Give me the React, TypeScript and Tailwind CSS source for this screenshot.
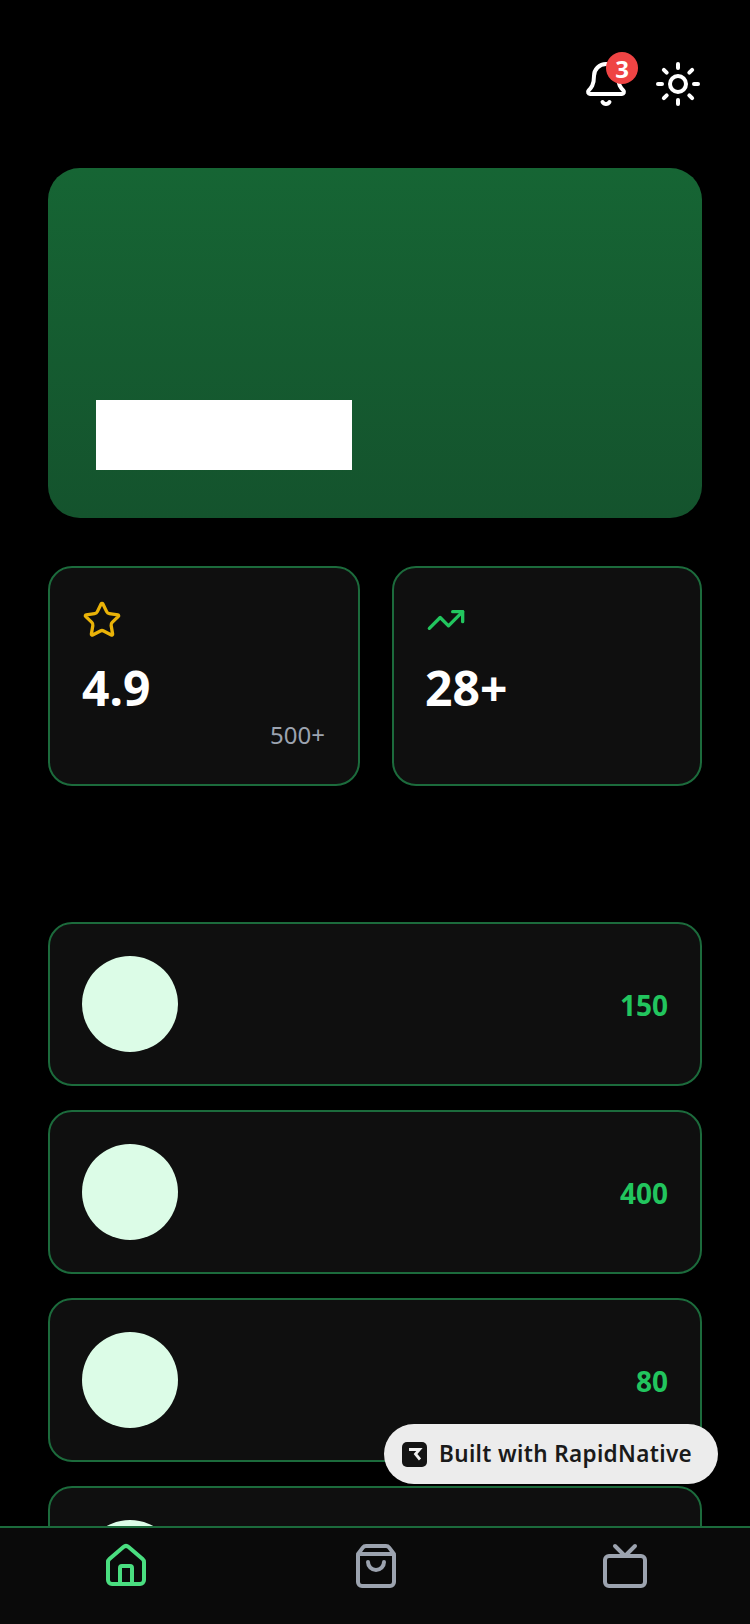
import { Bell, House, ShoppingBag, Star, Sun, TrendingUp, Tv } from "lucide-react";

const ITEMS = ["150", "400", "80", ""];

function RapidLogo() {
  return (
    <svg viewBox="0 0 25 25" className="w-[25px] h-[25px] shrink-0">
      <rect width="25" height="25" rx="5" fill="#141414" />
      <path
        d="M7 7.5h10.5l-4 4.5 4.5 5.5"
        fill="none"
        stroke="#f2f2f2"
        strokeWidth="2.8"
      />
    </svg>
  );
}

function StatCard({
  icon,
  value,
  note,
  className,
  valueClassName,
}: {
  icon: React.ReactNode;
  value: string;
  note?: string;
  className: string;
  valueClassName: string;
}) {
  return (
    <div
      className={`${className} h-[220px] rounded-[24px] border-2 border-[#1c6b3c] bg-[#0f0f0f] p-8`}
    >
      {icon}
      <p
        className={`${valueClassName} mt-4 text-[48px] leading-[64px] font-bold text-white`}
      >
        {value}
      </p>
      {note && (
        <p className="pr-[1px] text-right text-[24px] leading-[30px] text-[#9ca3af]">
          {note}
        </p>
      )}
    </div>
  );
}

export default function App() {
  return (
    <div className="relative h-[1624px] flex flex-col overflow-hidden bg-black font-['Noto_Sans',sans-serif]">
      <div className="flex-1 min-h-0 overflow-hidden px-12 pt-[60px]">
        <div className="flex justify-end gap-6">
          <div className="relative">
            <Bell size={48} color="#ffffff" />
            <span className="absolute -top-2 -right-2 w-8 h-8 rounded-full bg-[#ef4444] flex items-center justify-center pt-[1px] text-[24px] font-bold text-white">
              3
            </span>
          </div>
          <Sun size={48} color="#ffffff" />
        </div>

        <div className="mt-[60px] h-[350px] rounded-[32px] bg-gradient-to-b from-[#166534] to-[#14532d] p-12 flex items-end">
          <div className="w-[256px] h-[70px] bg-white" />
        </div>

        <div className="mt-12 flex gap-8">
          <StatCard
            className="w-[312px]"
            valueClassName="ml-0"
            icon={<Star size={40} color="#eab308" />}
            value="4.9"
            note="500+"
          />
          <StatCard
            className="w-[310px]"
            valueClassName="-ml-[1px]"
            icon={<TrendingUp size={40} color="#22c55e" />}
            value="28+"
          />
        </div>

        <div className="mt-[136px] flex flex-col gap-6">
          {ITEMS.map((item, index) => (
            <div
              key={index}
              className="shrink-0 h-[164px] rounded-[24px] border-2 border-[#1c6b3c] bg-[#0f0f0f] px-8 flex items-center justify-between"
            >
              <div className="w-24 h-24 rounded-full bg-[#dcfce7]" />
              {item && (
                <span className="mt-[2px] text-[28px] font-bold text-[#22c55e]">
                  {item}
                </span>
              )}
            </div>
          ))}
        </div>
      </div>

      <div className="shrink-0 h-[98px] border-t-2 border-[#1c6b3c] bg-[#0a0a0a] pt-[14px] pl-[1px] flex">
        <div className="flex-1 flex justify-center">
          <House size={48} color="#4ade80" />
        </div>
        <div className="flex-1 flex justify-center">
          <ShoppingBag size={48} color="#9ca3af" />
        </div>
        <div className="flex-1 flex justify-center">
          <Tv size={48} color="#9ca3af" />
        </div>
      </div>

      <div className="absolute left-[384px] top-[1424px] w-[334px] h-[60px] rounded-full bg-[#ececec] flex items-center gap-[12px] pl-[18px]">
        <RapidLogo />
        <span className="text-[22.5px] tracking-[0.35px] font-semibold text-[#1a1a1a] whitespace-nowrap">
          Built with RapidNative
        </span>
      </div>
    </div>
  );
}
